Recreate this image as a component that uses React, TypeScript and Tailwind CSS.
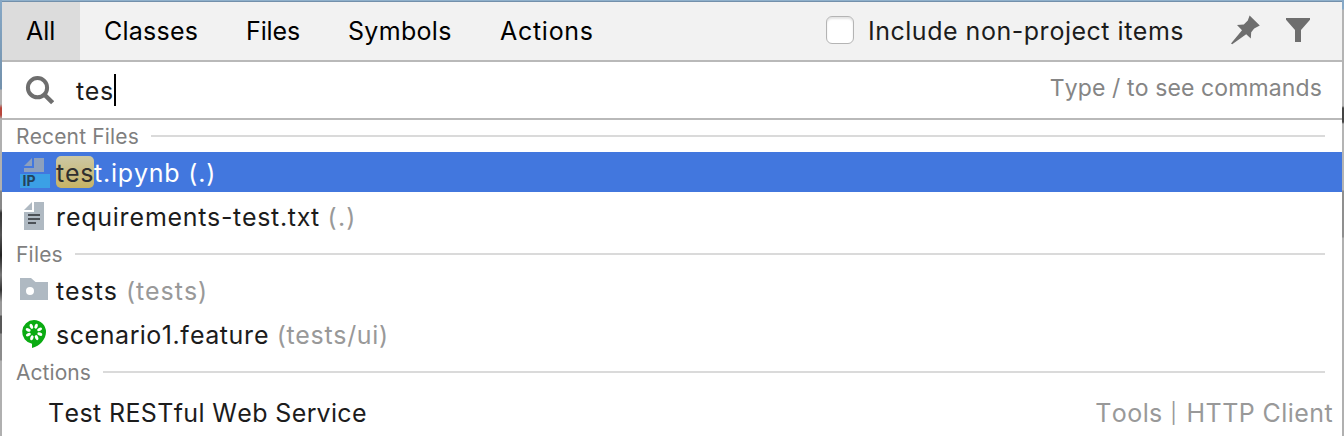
import type { ReactNode } from "react";

function SearchIcon() {
  return (
    <svg className="h-8 w-8 shrink-0" viewBox="0 0 32 32" fill="none" stroke="#6e6e6e">
      <circle cx="15.5" cy="13.7" r="9.6" strokeWidth="4" />
      <path d="M22 20.2 30.6 28.8" strokeWidth="4.4" />
    </svg>
  );
}

function PinIcon() {
  return (
    <svg className="h-8 w-8 shrink-0" viewBox="0 0 32 32" fill="#6e6e6e">
      <path d="M20.6 0.6 30.8 10.4 25.2 13.6 22.2 17.2 21.8 23.4 17.2 19.2 3.2 29.2 2 28.6 13 15.2 8 10 14.8 9.4 18.8 5.4Z" />
    </svg>
  );
}

function FilterIcon() {
  return (
    <svg className="h-8 w-8 shrink-0" viewBox="0 0 32 32" fill="#6e6e6e">
      <path d="M4 3H28V4.8L19 15V27H13V15L4 4.8Z" />
    </svg>
  );
}

function NotebookIcon() {
  return (
    <svg className="h-8 w-8 shrink-0" viewBox="0 0 32 32">
      <path d="M12 2V10H4Z" fill="#8da0bd" />
      <path d="M14 2H24V16H4V12H14Z" fill="#8da0bd" />
      <rect x="0" y="18" width="30" height="14" fill="#3ba0e6" />
      <text x="2.6" y="30" fontSize="14" fontWeight="700" fontFamily="Inter, sans-serif" fill="#24435c">
        IP
      </text>
    </svg>
  );
}

function TextFileIcon() {
  return (
    <svg className="h-8 w-8 shrink-0" viewBox="0 0 32 32">
      <path d="M12 2V10H4Z" fill="#afb9c2" />
      <path d="M14 2H24V30H4V10H14Z" fill="#afb9c2" />
      <path d="M12 2H14V12H4V10H12Z" fill="#fff" />
      <path d="M8 15H20M8 19H20M8 23H16" stroke="#4c5157" strokeWidth="2" />
    </svg>
  );
}

function FolderIcon() {
  return (
    <svg className="h-8 w-8 shrink-0" viewBox="0 0 32 32">
      <path fillRule="evenodd" d="M0 3H11L15.5 7H28V25H0ZM10 12A4 4 0 1 0 10 20A4 4 0 1 0 10 12Z" fill="#afb9c2" />
    </svg>
  );
}

const seeds = [20, 65, 110, 155, 200, 245, 290, 335];

function CucumberIcon() {
  return (
    <svg className="h-8 w-8 shrink-0" viewBox="0 0 32 32">
      <path d="M14 1A12 12 0 0 1 26 13C26 20 20 27 12 29V24.8A12 12 0 0 1 14 1Z" fill="#0aab12" />
      {seeds.map((a) => (
        <ellipse key={a} cx="14" cy="6.8" rx="1.6" ry="2.6" fill="#fff" transform={`rotate(${a} 14 13)`} />
      ))}
    </svg>
  );
}

function Heading({ children, spacing }: { children: ReactNode; spacing: string }) {
  return (
    <div className="flex h-8 items-center pr-[17px] pl-[14px] text-[21px] text-[#7f7f7f]">
      <span className={`pt-[2px] ${spacing}`}>{children}</span>
      <span className="ml-3 h-[2px] grow bg-[#dadada]" />
    </div>
  );
}

function Row({ icon, children }: { icon: ReactNode; children: ReactNode }) {
  return (
    <div className="flex h-10 items-center pl-[18px]">
      <span className="w-9 shrink-0">{icon}</span>
      {children}
    </div>
  );
}

const tab = "flex items-center";

export default function App() {
  return (
    <div className="flex h-[436px] w-[1344px] overflow-hidden bg-white font-['Inter',sans-serif] text-[25px] leading-[32px] whitespace-pre text-[#1c1c1c] [font-kerning:none]">
      <div className="w-[2px] shrink-0 bg-[linear-gradient(to_bottom,#86a8c6_0,#7391ac_89px,#b4b4b4_90px,#b4b4b4_104px,#b8453b_108px,#b8453b_115px,#b0b0b0_119px,#b0b0b0_190px,#888_191px,#888_209px,#333_213px,#555_235px,#222_255px,#777_275px,#333_290px,#999_302px,#999_315px,#585858_316px,#585858_333px,#8c8c8c_334px,#8c8c8c_360px,#b0b0b0_361px)]" />
      <div className="flex w-[1340px] shrink-0 flex-col">
        <div className="h-[2px] shrink-0 bg-[linear-gradient(to_bottom,#8fb0cb_50%,#7390ab_50%)]" />
        <div className="flex h-[60px] shrink-0 border-b-2 border-[#b9b9b9] bg-[#f2f2f2] text-black">
          <div className={`${tab} w-[78px] bg-[#dcdcdc] pl-[24px]`}>All</div>
          <div className={`${tab} w-[142px] pl-[24px] tracking-[0.24px]`}>Classes</div>
          <div className={`${tab} w-[102px] pl-[24px] tracking-[-0.1px]`}>Files</div>
          <div className={`${tab} w-[152px] pl-[24px] tracking-[0.3px]`}>Symbols</div>
          <div className={`${tab} w-[140px] pl-[24px] tracking-[0.72px]`}>Actions</div>
          <div className="ml-auto flex items-center text-[#1c1c1c]">
            <span className="mb-[2px] h-[28px] w-[28px] rounded-[6px] border border-[#b4b4b4] bg-white shadow-[inset_0_2px_2px_#e4e4e4]" />
            <span className="ml-[14px] w-[361px] tracking-[0.51px]">Include non-project items</span>
            <PinIcon />
            <span className="w-[21px]" />
            <FilterIcon />
            <span className="w-[28px]" />
          </div>
        </div>
        <div className="flex h-[58px] shrink-0 items-center border-b-2 border-[#b9b9b9] pr-[20px] pl-[20px]">
          <SearchIcon />
          <span className="ml-[22px] pt-[2px] tracking-[0.6px]">tes</span>
          <span className="h-8 w-[2px] bg-black" />
          <span className="ml-auto pb-[5px] text-[23px] tracking-[0.12px] text-[#858585]">Type / to see commands</span>
        </div>
        <Heading spacing="tracking-[0.15px]">Recent Files</Heading>
        <div className="bg-[#4277de] text-white">
          <Row icon={<NotebookIcon />}>
            <span className="h-8 w-[38px] rounded-[5px] bg-[linear-gradient(to_bottom,#cdc8a4,#c7b365)] pt-px tracking-[0.72px] text-[#2f2f2f]">tes</span>
            <span className="pt-[2px] tracking-[0.8px]">t.ipynb (.)</span>
          </Row>
        </div>
        <div className="pt-1 pb-[2px]">
          <Row icon={<TextFileIcon />}>
            <span className="pt-[2px] tracking-[0.68px]">requirements-test.txt </span>
            <span className="pt-[2px] tracking-[1.2px] text-[#999]">(.)</span>
          </Row>
        </div>
        <Heading spacing="tracking-[0.2px]">Files</Heading>
        <div className="flex flex-col gap-1 pt-[1px] pb-[1px]">
          <Row icon={<FolderIcon />}>
            <span className="tracking-[0.92px]">tests </span>
            <span className="tracking-[0.95px] text-[#999]">(tests)</span>
          </Row>
          <Row icon={<CucumberIcon />}>
            <span className="tracking-[0.56px]">scenario1.feature </span>
            <span className="tracking-[0.68px] text-[#999]">(tests/ui)</span>
          </Row>
        </div>
        <Heading spacing="tracking-[0.05px]">Actions</Heading>
        <div className="flex h-[50px] shrink-0 items-center justify-between pr-[9px] pl-[46px]">
          <span className="tracking-[0.37px]">Test RESTful Web Service</span>
          <span className="flex items-center tracking-[0.42px] text-[#999]">
            Tools <span className="w-[9px] text-[20px]">|</span> HTTP Client
          </span>
        </div>
      </div>
      <div className="w-[2px] shrink-0 bg-[linear-gradient(to_bottom,#86a8c6_0,#86a8c6_9px,#b4b4b4_10px,#b4b4b4_106px,#444_108px,#444_122px,#b4b4b4_124px,#b4b4b4_190px,#8f8f8f_191px,#8f8f8f_237px,#b0b0b0_238px)]" />
    </div>
  );
}
